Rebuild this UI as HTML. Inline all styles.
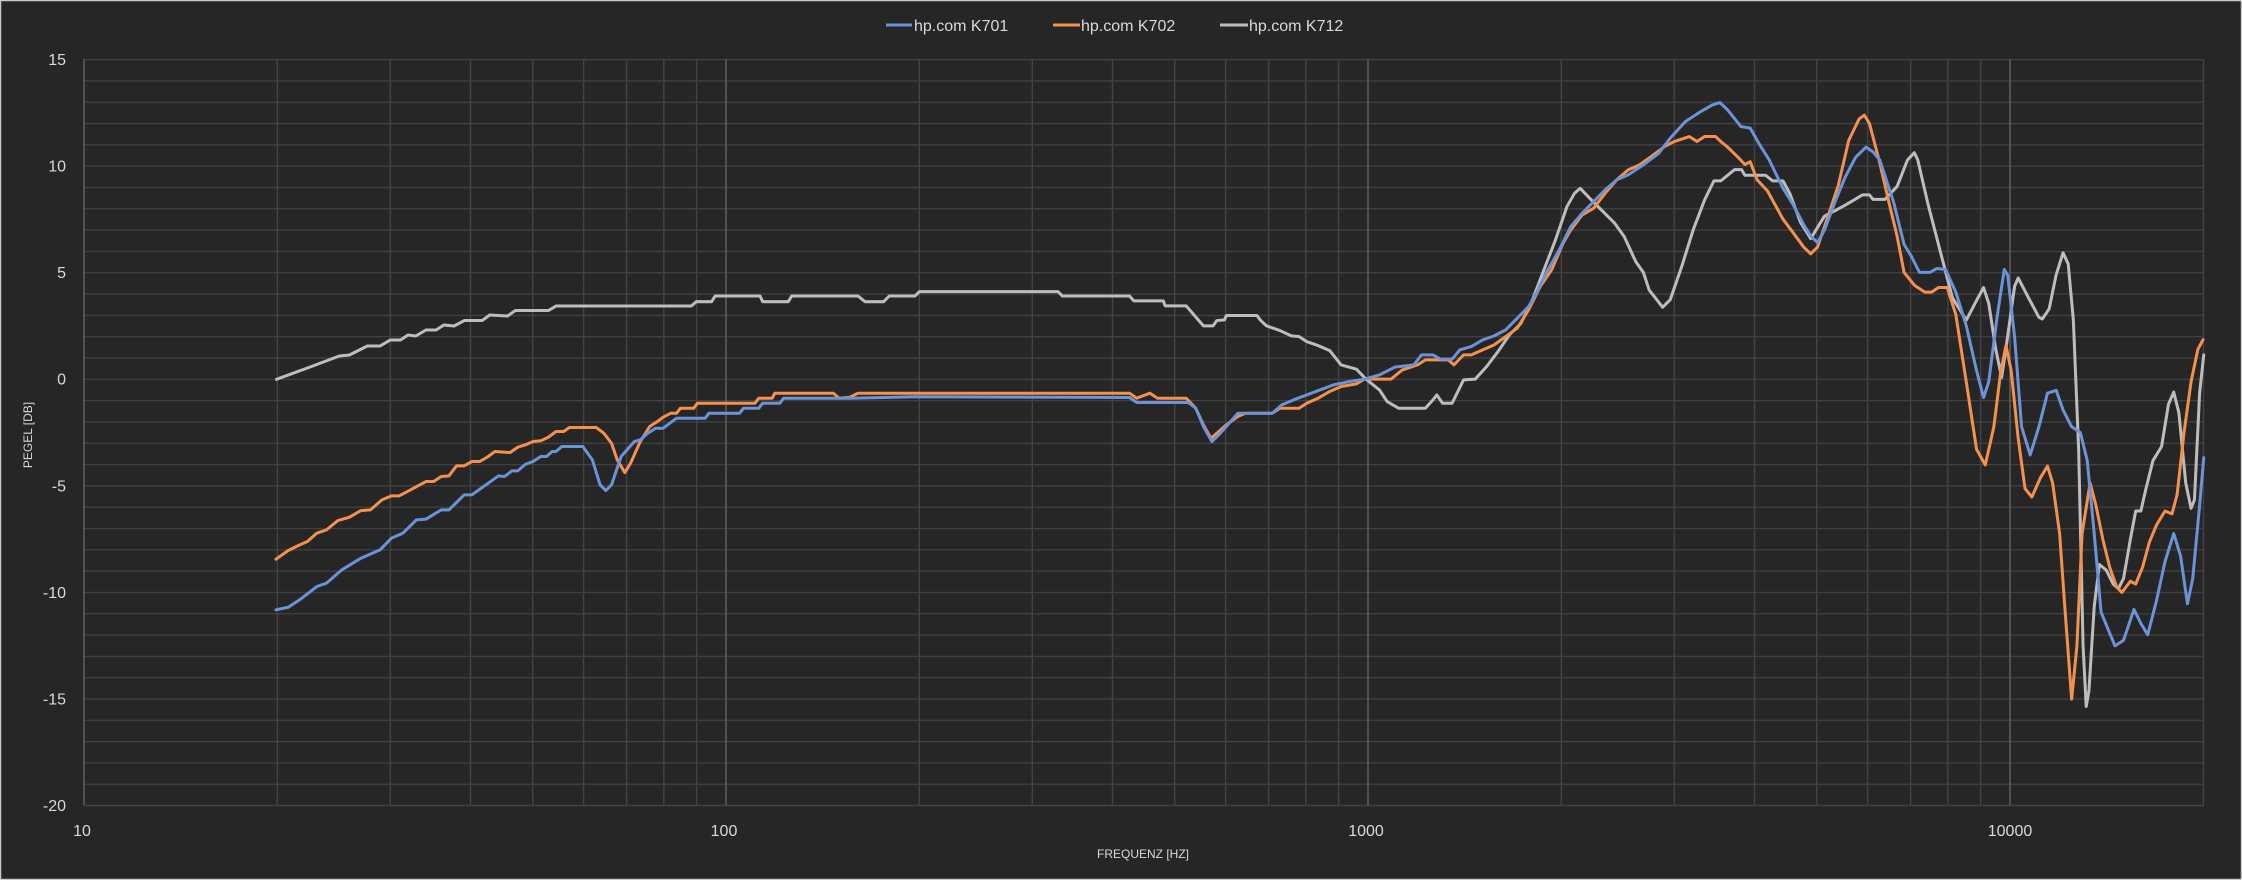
<!DOCTYPE html>
<html><head><meta charset="utf-8"><style>
html,body{margin:0;padding:0;background:#262626;}
body{width:2242px;height:880px;overflow:hidden;}
svg{display:block;}
text{font-family:"Liberation Sans",sans-serif;fill:#d9d9d9;}
</style></head><body>
<svg width="2242" height="880" viewBox="0 0 2242 880" xmlns="http://www.w3.org/2000/svg">
<defs>
<pattern id="hg" x="0" y="59" width="10" height="21.314" patternUnits="userSpaceOnUse">
<line x1="0" y1="0.5" x2="10" y2="0.5" stroke="#434343" stroke-width="1.4"/>
</pattern>
</defs>
<rect x="0" y="0" width="2242" height="880" fill="#262626"/>
<rect x="0.5" y="0.5" width="2241" height="879" fill="none" stroke="#c8c8c8" stroke-width="1.5"/>
<rect x="84" y="58.5" width="2120" height="747.5" fill="url(#hg)"/>
<line x1="84" y1="805.5" x2="2204" y2="805.5" stroke="#434343" stroke-width="1.4"/>
<g stroke="#434343" stroke-width="1.4">
<line x1="277.3" y1="59" x2="277.3" y2="805"/><line x1="390.3" y1="59" x2="390.3" y2="805"/><line x1="470.5" y1="59" x2="470.5" y2="805"/><line x1="532.7" y1="59" x2="532.7" y2="805"/><line x1="583.6" y1="59" x2="583.6" y2="805"/><line x1="626.6" y1="59" x2="626.6" y2="805"/><line x1="663.8" y1="59" x2="663.8" y2="805"/><line x1="696.6" y1="59" x2="696.6" y2="805"/>
<line x1="919.3" y1="59" x2="919.3" y2="805"/><line x1="1032.3" y1="59" x2="1032.3" y2="805"/><line x1="1112.5" y1="59" x2="1112.5" y2="805"/><line x1="1174.7" y1="59" x2="1174.7" y2="805"/><line x1="1225.6" y1="59" x2="1225.6" y2="805"/><line x1="1268.6" y1="59" x2="1268.6" y2="805"/><line x1="1305.8" y1="59" x2="1305.8" y2="805"/><line x1="1338.6" y1="59" x2="1338.6" y2="805"/>
<line x1="1561.3" y1="59" x2="1561.3" y2="805"/><line x1="1674.3" y1="59" x2="1674.3" y2="805"/><line x1="1754.5" y1="59" x2="1754.5" y2="805"/><line x1="1816.7" y1="59" x2="1816.7" y2="805"/><line x1="1867.6" y1="59" x2="1867.6" y2="805"/><line x1="1910.6" y1="59" x2="1910.6" y2="805"/><line x1="1947.8" y1="59" x2="1947.8" y2="805"/><line x1="1980.6" y1="59" x2="1980.6" y2="805"/>
<line x1="2203.5" y1="59" x2="2203.5" y2="805"/>
</g>
<g stroke="#5e5e5e" stroke-width="1.5">
<line x1="84" y1="59" x2="84" y2="805"/><line x1="726" y1="59" x2="726" y2="805"/><line x1="1368" y1="59" x2="1368" y2="805"/><line x1="2010" y1="59" x2="2010" y2="805"/>
</g>
<g font-size="16" text-anchor="end">
<text x="66" y="65">15</text><text x="66" y="171.6">10</text><text x="66" y="278.1">5</text><text x="66" y="384.7">0</text><text x="66" y="491.3">-5</text><text x="66" y="597.9">-10</text><text x="66" y="704.4">-15</text><text x="66" y="811">-20</text>
</g>
<g font-size="16" text-anchor="middle">
<text x="82" y="836">10</text><text x="724" y="836">100</text><text x="1366" y="836">1000</text><text x="2010" y="836">10000</text>
</g>
<text x="1143" y="858" font-size="12" text-anchor="middle">FREQUENZ [HZ]</text>
<text transform="translate(32,435) rotate(-90)" font-size="12" text-anchor="middle">PEGEL [DB]</text>
<g font-size="16">
<line x1="886" y1="25" x2="912" y2="25" stroke="#6b93d8" stroke-width="3"/><text x="914" y="31">hp.com K701</text>
<line x1="1053" y1="25" x2="1080" y2="25" stroke="#f4914c" stroke-width="3"/><text x="1081" y="31">hp.com K702</text>
<line x1="1220" y1="25" x2="1248" y2="25" stroke="#bdbdbd" stroke-width="3"/><text x="1249" y="31">hp.com K712</text>
</g>
<g transform="scale(1.4298)" fill="none" stroke-width="2.1" stroke-linejoin="round" stroke-linecap="round">
<path stroke="#bdbdbd" d="M193.4,265.3 L217.6,256.4 L237.3,249 L244.4,248.3 L256.9,242 L265.8,242 L272.9,237.8 L280.1,237.8 L285.4,234.3 L290.8,235 L297.9,230.8 L305.1,230.8 L310.4,227.3 L317.6,228 L324.7,224.2 L337.2,224.2 L342.5,220.3 L355,221 L360.4,217.2 L383.6,217.2 L388.9,214 L483.5,214 L487,211 L497.7,211 L500.2,207 L531.6,207 L533.4,211 L551.3,211 L553.7,207 L600,207 L605,211 L618,211 L622,207 L640,207 L643,204 L740,204 L743,207 L790,207 L793,210.4 L813.6,210.4 L814.9,213.9 L829.6,213.9 L841.7,227.9 L848.4,227.9 L851,224.2 L856.4,223.7 L857.7,220.7 L879.1,220.7 L881.8,224.2 L885.8,227.9 L895.2,231.2 L903.2,234.9 L908.6,235.4 L913.9,238.9 L921.9,241.7 L930,245.2 L938,255.2 L948.7,258.2 L955.4,265.2 L964.8,272.7 L970.1,280.8 L978.1,285.5 L996.9,285.5 L1002.2,279.7 L1004.9,276.2 L1008.9,282 L1015.6,282 L1023.6,265.7 L1031.7,265.2 L1039.7,256.4 L1047.7,245.9 L1055.7,234.2 L1063.8,226.1 L1071.8,209.7 L1079.8,188.8 L1087.9,167.8 L1095.9,144.5 L1101.2,135.2 L1105.2,131.7 L1111.9,138.7 L1120,146.8 L1129.3,156.1 L1136,165.5 L1144,182.9 L1149.4,190.6 L1153.4,202.8 L1158.8,209.7 L1162.8,214.9 L1168.1,209.7 L1176.2,186.4 L1184.2,160.8 L1192.2,139.8 L1198.7,126.5 L1203.5,126.5 L1213.2,118.6 L1218,118.6 L1220.4,122.6 L1234.9,122.6 L1239.8,126.5 L1247,126.5 L1251.9,135.5 L1259.1,155.2 L1266.4,166.9 L1276,151.2 L1285.7,146.1 L1290.6,143.4 L1295.4,140.6 L1302.6,136.3 L1307.5,136.3 L1309.9,139.4 L1318.4,139.4 L1326.8,130.4 L1334.1,111.9 L1338.9,106.8 L1341.3,111.9 L1348.6,143.4 L1358.3,180.7 L1365.5,208.2 L1375.2,223.9 L1382.4,210.1 L1387.3,201.1 L1390.9,212.1 L1395.7,243.5 L1399.9,264 L1403,243.5 L1409,200.3 L1411.5,194.4 L1418.7,208.2 L1426,221.9 L1428.4,223.1 L1433.2,216 L1438,192.5 L1442.9,176.8 L1446.5,184.6 L1450.1,223.9 L1453.8,314.2 L1456.9,451.7 L1459.1,494.1 L1461,483.1 L1464.7,424.2 L1468.3,394.8 L1473.1,398.7 L1478,408.5 L1481.6,411.7 L1485.2,404.6 L1490,377.1 L1493.7,357.4 L1497.3,357.4 L1500.9,341.7 L1505.8,322.1 L1511.8,312.3 L1516.6,282.8 L1520.3,274.2 L1523.9,288.7 L1528.7,337.8 L1532.4,355.5 L1534.8,349.6 L1538.4,275 L1541.3,248.2"/>
<path stroke="#f4914c" d="M193,391.1 L201.6,385 L209.6,381.1 L215,378.7 L221.6,372.9 L228.3,370.6 L236.3,364.1 L244.4,361.7 L252.4,357.1 L259.1,356.6 L267.1,349.6 L273.8,346.8 L279.2,346.8 L287.2,342.6 L297.9,336.8 L303.2,336.8 L308.6,333.3 L314,332.8 L319.3,325.8 L324.7,325.8 L330,322.8 L335.4,322.8 L340.7,319.8 L346.1,315.8 L356.8,316.5 L362.1,312.8 L367.5,311.1 L372.8,308.8 L378.2,308.3 L383.5,305.8 L388.9,301.8 L394.2,301.8 L398.2,299 L417,299 L422.3,303 L427.7,310 L431.7,321.6 L437,330.5 L441,324 L447.8,308.8 L454.4,298.3 L459.8,294.8 L463.8,291.8 L469.2,289 L473.2,289 L475.9,285.5 L485.2,285.5 L487.8,282 L528,282 L530.7,278.5 L540.1,278.5 L541.9,275 L582.9,275 L586.9,278.5 L594.4,277.8 L600,275 L790,275 L795,278.5 L804.2,275 L809.6,278.5 L829.6,278.5 L836.3,285.5 L841.7,297.2 L847,306.5 L851,303 L857.7,297.2 L865.7,291.3 L871.1,289 L889.8,289 L895.2,285.5 L908.6,285.5 L913.9,282 L921.9,278.5 L930,273.8 L938,270.3 L948.7,268.5 L954.1,265.2 L972.8,265.2 L980.8,258.7 L991.5,255.2 L996.9,251.7 L1012.9,251.7 L1016.9,255.2 L1023.6,248.2 L1029,248.2 L1037,244.7 L1045,241.2 L1053.1,235.4 L1061.1,229.6 L1069.1,216.7 L1077.2,200.4 L1085.2,188.8 L1093.2,170.1 L1098.6,160.8 L1106.6,150.3 L1114.6,145.6 L1122.6,135.2 L1130.7,125.8 L1138.7,118.8 L1146.7,115.3 L1154.8,109.5 L1164.2,102.5 L1170.9,99 L1181.5,95.5 L1186.9,99 L1192.2,95.5 L1199.9,95.5 L1203.5,99 L1208.3,102.9 L1215.6,110 L1220.4,115.1 L1224.1,113.1 L1228.9,125.7 L1236.2,133.6 L1247,153.2 L1254.3,163 L1261.5,172.8 L1266.4,177.5 L1271.2,172.8 L1278.5,151.2 L1285.7,129.6 L1293,98.2 L1300.2,83.3 L1303.9,80.5 L1307.5,86.4 L1314.7,113.9 L1322,145.3 L1326.8,165 L1331.7,190.5 L1338.9,199.5 L1346.2,204.3 L1351,204.3 L1355.8,201.1 L1361.9,201.1 L1367.9,220 L1375.2,267.1 L1382.4,314.2 L1388.5,325.2 L1394.5,298.5 L1399.4,259.2 L1403,241.6 L1406.6,259.2 L1411.5,306.4 L1416.3,341.7 L1421.1,347.6 L1427.2,333.9 L1432,326 L1435.6,337.8 L1440.5,373.2 L1444.1,424.2 L1448.9,489 L1452.6,451.7 L1456.2,373.2 L1461.8,337.8 L1465.9,353.5 L1470.7,377.1 L1475.5,396.7 L1480.4,410.5 L1484,414.4 L1490,406.5 L1493.7,408.5 L1498.5,396.7 L1503.3,379.1 L1508.2,367.3 L1514.2,357.4 L1519.1,359.4 L1522.7,345.7 L1527.5,302.5 L1532.4,267.1 L1537.2,244.3 L1540.8,237.6"/>
<path stroke="#6b93d8" d="M193,426.5 L201.6,424.7 L209.6,419.5 L221.6,410.2 L228.3,407.9 L239,398.6 L252.4,390.4 L265.8,384.6 L273.8,376.4 L281.8,372.9 L291.2,363.6 L297.9,363.1 L308.6,356.6 L314,356.6 L324.7,346.1 L330,346.1 L348.7,332.8 L352.8,333.3 L358.1,329.3 L362.1,329.3 L367.5,324.7 L372.8,322.8 L378.2,319.3 L382.2,319.3 L386.2,315.8 L388.9,315.8 L392.9,312.3 L407.6,312.3 L414.3,321.6 L419.7,339.1 L423.7,343.1 L427.7,339.1 L434.4,319.3 L443.7,308.8 L447.8,307.6 L453.1,303 L458.5,299.5 L463.8,299.5 L473.2,292.5 L493.2,292.5 L495.9,289 L517.3,289 L520,285.5 L530.7,285.5 L533.4,282 L545.4,282 L548.1,278.5 L594.4,278.5 L640,277.5 L790,278 L795,281.5 L831,281.5 L836.3,285.5 L841.7,298.3 L847.6,308.8 L852.4,304.2 L857.7,298.3 L865.7,289 L889.8,289 L896.5,283.2 L905.9,279.2 L913.9,276.2 L924.6,272.2 L932.6,269.2 L943.4,266.9 L954.1,265.2 L964.8,262.2 L975.5,256.8 L988.8,255.2 L994.2,248.2 L1002.2,248.2 L1007.6,251.2 L1015.6,251.2 L1021,244.7 L1029,242.4 L1037,237.7 L1045,234.9 L1053.1,230.7 L1061.1,222.6 L1069.1,214.4 L1074.5,205.1 L1082.5,188.8 L1090.5,174.8 L1098.6,158.5 L1106.6,149.1 L1114.6,141 L1122.6,132.8 L1130.7,125.8 L1138.7,122.3 L1149.4,115.3 L1160.1,107.2 L1168.1,96.7 L1178.8,85 L1189.5,78 L1197.6,73.4 L1202.9,71.7 L1208.3,76.9 L1217.6,88.5 L1224.1,89.6 L1230.1,100.2 L1237.4,111.9 L1247,131.6 L1254.3,143.4 L1261.5,157.1 L1266.4,165 L1271.2,169.7 L1276,161 L1283.3,141.4 L1290.6,123.7 L1297.8,110 L1305.1,102.9 L1309.9,106.1 L1314.7,111.9 L1324.4,141.4 L1331.7,170.9 L1336.5,178.7 L1342.5,190.5 L1349.8,190.5 L1354.6,187.8 L1360.7,188.5 L1367.9,204.3 L1375.2,227.8 L1382.4,259.2 L1387.3,278.1 L1390.9,267.1 L1397,220 L1401.8,188.5 L1404.2,192.5 L1409,235.7 L1413.9,298.5 L1419.9,318.2 L1426,298.5 L1432,275 L1438.1,273 L1442.9,286.7 L1448.9,298.5 L1455,302.5 L1459.8,322.1 L1464.7,373.2 L1469.5,428.2 L1474.3,439.9 L1479.2,451.7 L1485.2,447.8 L1492.5,426.2 L1497.3,436 L1502.1,443.9 L1508.2,420.3 L1514.2,392.8 L1520.3,373.2 L1525.1,388.9 L1529.9,422.3 L1533.6,404.6 L1538.4,353.5 L1541.3,320.1"/>
</g>
</svg>
</body></html>
